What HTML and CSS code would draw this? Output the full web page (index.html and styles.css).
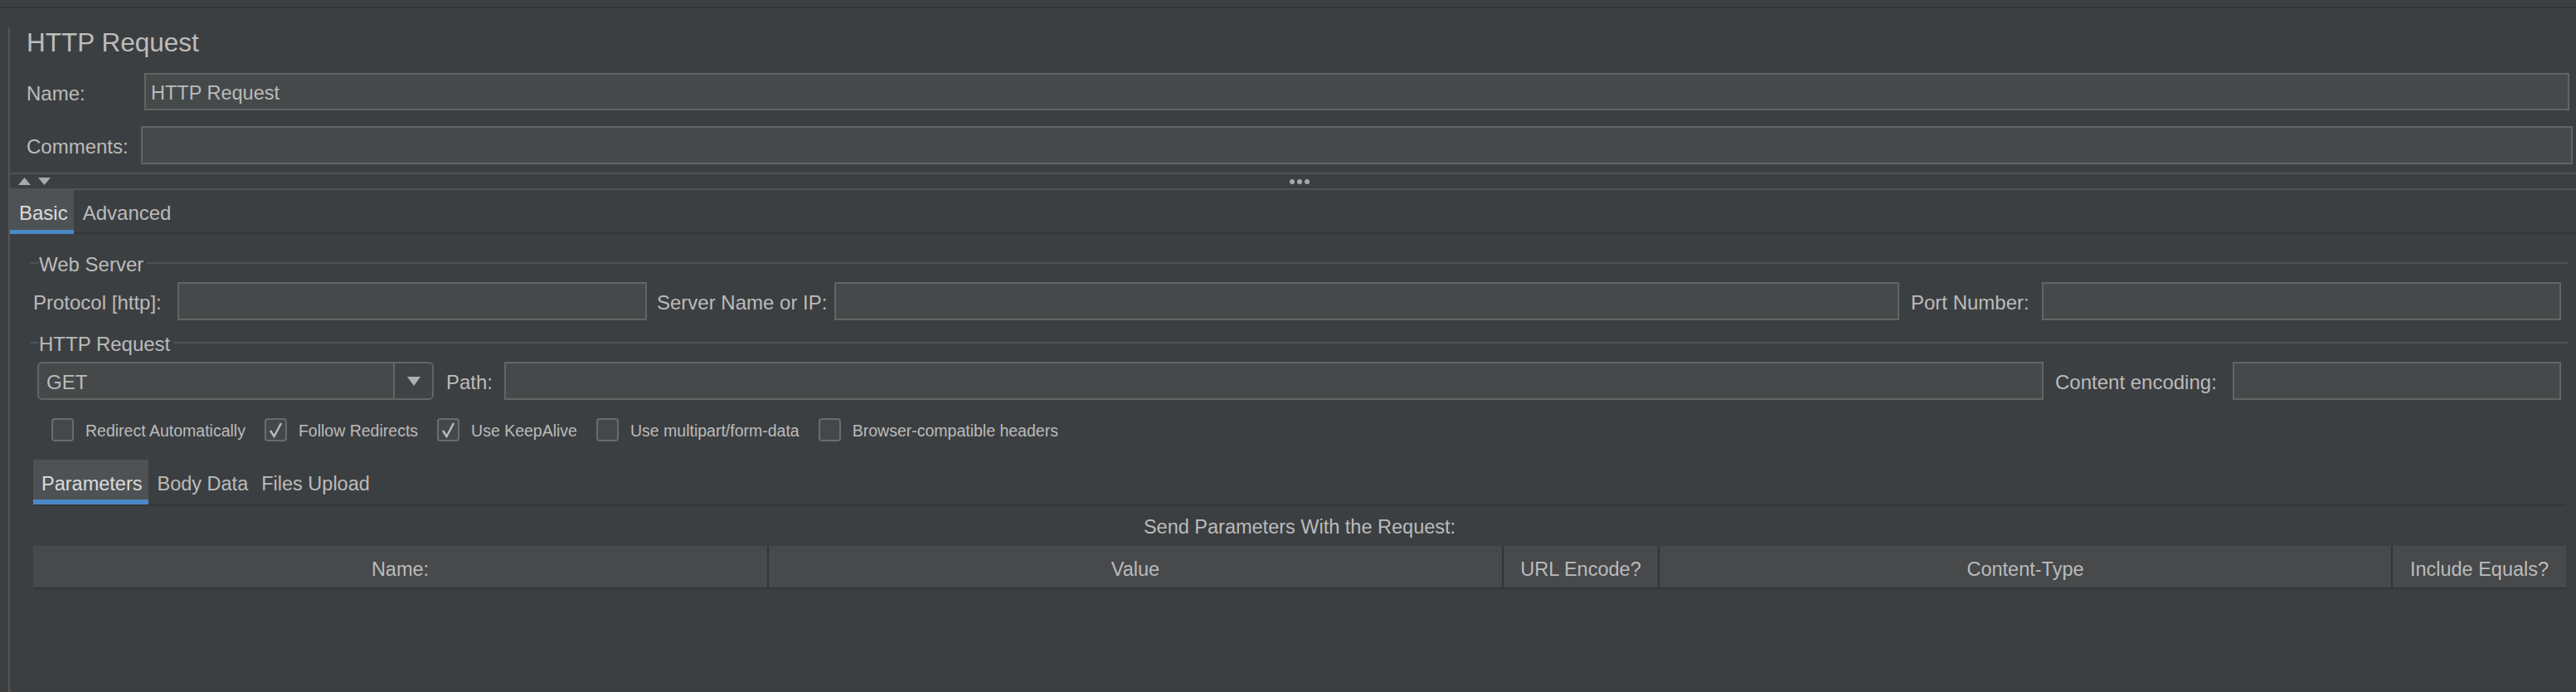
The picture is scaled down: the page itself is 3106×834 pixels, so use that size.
FILE: index.html
```html
<!DOCTYPE html>
<html>
<head>
<meta charset="utf-8">
<title>HTTP Request</title>
<link rel="stylesheet" href="styles.css">
</head>
<body>
<div class="topbar"></div>
<div class="main">
  <div class="title">HTTP Request</div>
  <div class="row name-row">
    <div class="lbl name-lbl">Name:</div>
    <div class="field name-field">HTTP Request</div>
  </div>
  <div class="row comments-row">
    <div class="lbl comments-lbl">Comments:</div>
    <div class="field comments-field"></div>
  </div>
  <div class="splitter">
    <div class="arrows">
      <svg width="40" height="10" viewBox="0 0 40 10"><polygon points="0,9 7.5,0 15,9" fill="#a9a9a9"/><polygon points="24,0 39,0 31.5,9" fill="#a9a9a9"/></svg>
    </div>
    <div class="dots"><span></span><span></span><span></span></div>
    <div></div>
  </div>
  <div class="tabs">
    <div class="tab sel">Basic</div>
    <div class="tab">Advanced</div>
  </div>
  <div class="panel">
    <div class="group-title ws-title"><span>Web Server</span></div>
    <div class="row ws-row">
      <div class="lbl protocol-lbl">Protocol [http]:</div>
      <div class="field protocol-field"></div>
      <div class="lbl server-lbl">Server Name or IP:</div>
      <div class="field server-field"></div>
      <div class="lbl port-lbl">Port Number:</div>
      <div class="field port-field"></div>
    </div>
    <div class="group-title http-title"><span>HTTP Request</span></div>
    <div class="row http-row">
      <div class="combo">
        <div class="combo-text">GET</div>
        <div class="combo-btn"><svg width="16" height="11" viewBox="0 0 16 11"><polygon points="0,0 16,0 8,11" fill="#b0b0b0"/></svg></div>
      </div>
      <div class="lbl path-lbl">Path:</div>
      <div class="field path-field"></div>
      <div class="lbl enc-lbl">Content encoding:</div>
      <div class="field enc-field"></div>
    </div>
    <div class="checks">
      <div class="check"><div class="box"></div><span>Redirect Automatically</span></div>
      <div class="check"><div class="box"><svg width="23" height="24" viewBox="0 0 23 24"><polyline points="5,13 9.5,20 18,4" fill="none" stroke="#bdbdbd" stroke-width="2.4"/></svg></div><span>Follow Redirects</span></div>
      <div class="check"><div class="box"><svg width="23" height="24" viewBox="0 0 23 24"><polyline points="5,13 9.5,20 18,4" fill="none" stroke="#bdbdbd" stroke-width="2.4"/></svg></div><span>Use KeepAlive</span></div>
      <div class="check"><div class="box"></div><span>Use multipart/form-data</span></div>
      <div class="check"><div class="box"></div><span>Browser-compatible headers</span></div>
    </div>
    <div class="subpanel">
      <div class="subtabs">
        <div class="subtab sel">Parameters</div>
        <div class="subtab">Body Data</div>
        <div class="subtab">Files Upload</div>
      </div>
      <div class="send">Send Parameters With the Request:</div>
      <div class="thead">
        <div class="th">Name:</div>
        <div class="th">Value</div>
        <div class="th">URL Encode?</div>
        <div class="th">Content-Type</div>
        <div class="th">Include Equals?</div>
      </div>
    </div>
  </div>
</div>
</body>
</html>
```

FILE: styles.css
```css
* { box-sizing: border-box; }
html, body {
  margin: 0;
  padding: 0;
  background: #3c3f41;
  height: 100%;
  overflow: hidden;
}
body {
  font-family: "Liberation Sans", Arial, Helvetica, sans-serif;
  color: #bbbbbb;
  font-size: 24px;
}
.topbar {
  height: 10px;
  border-bottom: 2px solid #313335;
}
.main {
  margin-left: 10px;
  border-left: 2px solid #535557;
  height: 824px;
}
.title {
  font-size: 31.5px;
  line-height: 36px;
  margin-top: 23px;
  padding-left: 20px;
  color: #bcbcbc;
}
.row {
  display: flex;
  align-items: center;
}
.lbl {
  white-space: nowrap;
  flex: none;
  padding-top: 4px;
}
.field {
  background: #45494a;
  border: 2px solid #646464;
  height: 100%;
  display: flex;
  align-items: center;
  padding-left: 6px;
  padding-top: 4px;
  color: #bbbbbb;
}
.name-row {
  margin-top: 19px;
  height: 45px;
  padding-left: 20px;
  margin-right: 8px;
}
.name-lbl { width: 142px; }
.name-field { flex: 1; font-size: 23.5px; }
.comments-row {
  margin-top: 19px;
  height: 46px;
  padding-left: 20px;
  margin-right: 4px;
}
.comments-lbl { width: 138px; }
.comments-field { flex: 1; }

.splitter {
  margin-top: 10px;
  height: 21px;
  border-top: 2px solid #505355;
  border-bottom: 2px solid #505355;
  display: grid;
  grid-template-columns: 1fr auto 1fr;
  align-items: center;
}
.arrows {
  padding-left: 10px;
  display: flex;
  align-items: center;
  height: 100%;
  padding-top: 1px;
}
.arrows svg { display: block; }
.dots {
  display: flex;
  gap: 3px;
  margin-left: 16px;
}
.dots span {
  width: 6px;
  height: 6px;
  border-radius: 50%;
  background: #a9a9a9;
}

.tabs {
  display: flex;
  height: 53px;
  box-shadow: inset 0 -2px 0 #333537;
}
.tab {
  height: 53px;
  padding: 7px 7px 0 11px;
  display: flex;
  align-items: center;
  border-bottom: 5px solid transparent;
}
.tab.sel {
  background: #4e5254;
  border-bottom-color: #4a88c7;
  color: #dcdcdc;
}

.panel {
  padding: 0 9px 0 24px;
}
.group-title {
  display: flex;
  align-items: center;
  height: 28px;
}
.group-title::before {
  content: "";
  width: 11px;
  height: 2px;
  background: #4f5254;
}
.group-title span {
  padding-right: 4px;
  padding-top: 3px;
  white-space: nowrap;
}
.group-title::after {
  content: "";
  flex: 1;
  height: 2px;
  background: #4f5254;
}
.ws-title { margin-top: 21px; }
.ws-row {
  margin-top: 9px;
  height: 46px;
  padding-left: 4px;
  padding-right: 9px;
}
.protocol-lbl { width: 174px; }
.protocol-field { width: 566px; }
.server-lbl { margin-left: 12px; width: 214px; }
.server-field { flex: 1; }
.port-lbl { margin-left: 14px; width: 158px; }
.port-field { width: 626px; }

.http-title { margin-top: 13px; }
.http-row {
  margin-top: 9px;
  height: 46px;
  padding-left: 9px;
  padding-right: 9px;
}
.combo {
  width: 478px;
  height: 46px;
  border: 2px solid #646464;
  border-radius: 6px;
  background: #45494a;
  display: flex;
  overflow: hidden;
  flex: none;
}
.combo-text {
  flex: 1;
  display: flex;
  align-items: center;
  padding-left: 9px;
  padding-top: 4px;
}
.combo-btn {
  width: 47px;
  border-left: 2px solid #646464;
  background: #404345;
  display: flex;
  align-items: center;
  justify-content: center;
}
.combo-btn svg { display: block; }
.path-lbl { margin-left: 15px; width: 70px; }
.path-field { flex: 1; }
.enc-lbl { margin-left: 14px; width: 214px; }
.enc-field { width: 396px; }

.checks {
  display: flex;
  align-items: center;
  margin-top: 22px;
  height: 28px;
  padding-left: 26px;
  gap: 23px;
  font-size: 19.5px;
}
.check {
  display: flex;
  align-items: center;
}
.check span { padding-top: 3px; }
.box {
  width: 27px;
  height: 28px;
  border: 2px solid #6b6b6b;
  border-radius: 4px;
  background: #43494a;
  margin-right: 14px;
}
.box svg { display: block; }

.subpanel {
  margin-top: 22px;
  margin-left: 4px;
  margin-right: 3px;
}
.subtabs {
  display: flex;
  height: 56px;
  box-shadow: inset 0 -3px 0 #35373a;
  font-size: 23.5px;
}
.subtab {
  height: 54px;
  padding: 10px 8px 0 10px;
  display: flex;
  align-items: center;
  border-bottom: 6px solid transparent;
}
.subtab + .subtab { padding-left: 10px; padding-right: 6px; }
.subtab.sel {
  background: #4e5254;
  border-bottom-color: #4a88c7;
  color: #dcdcdc;
}
.send {
  margin-top: 11px;
  line-height: 28px;
  height: 27px;
  text-align: center;
  font-size: 23.5px;
}
.thead {
  margin-top: 10px;
  height: 52px;
  display: grid;
  grid-template-columns: 885px 886px 188px 884px 1fr;
  background: #47494b;
  border-bottom: 2px solid #323436;
  font-size: 23.5px;
}
.th {
  display: flex;
  align-items: center;
  justify-content: center;
  padding-top: 6px;
  white-space: nowrap;
}
.th + .th {
  border-left: 2px solid #323436;
}
```
